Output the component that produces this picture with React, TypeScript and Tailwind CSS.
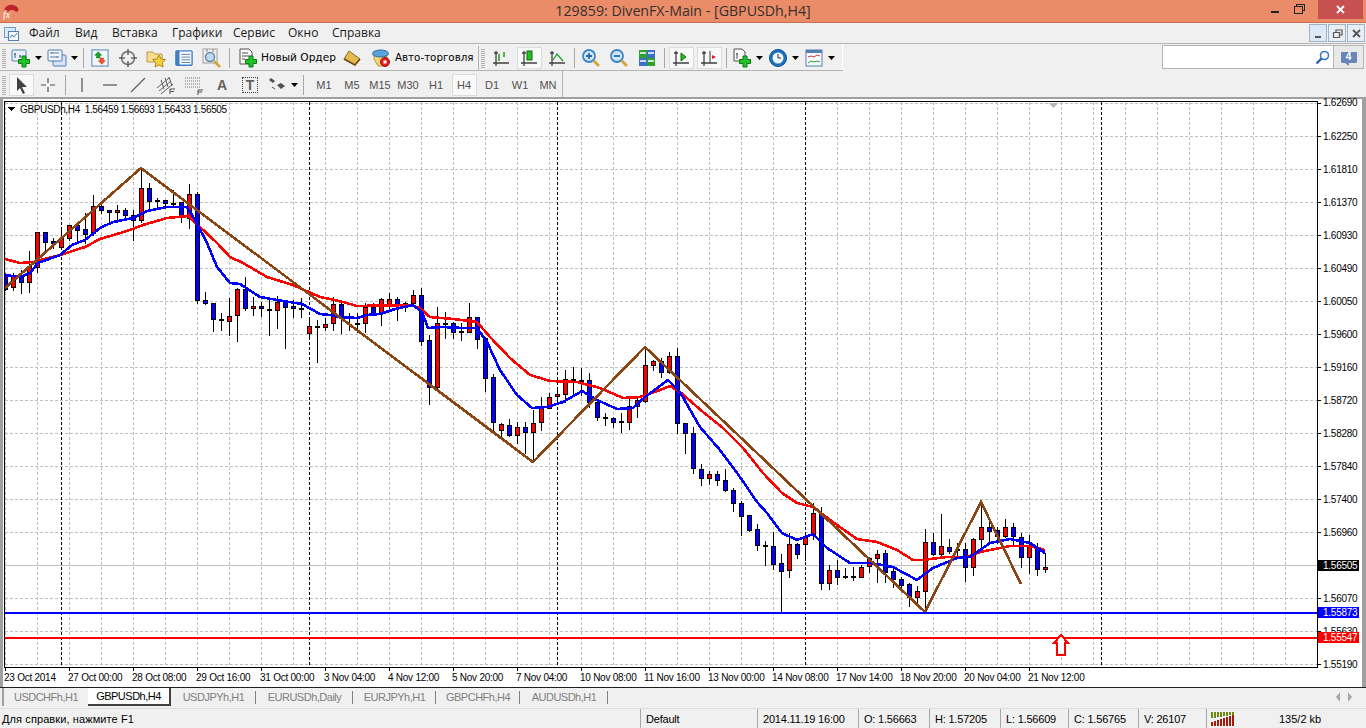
import React from "react";

type Candle = [number, number, number, number, "r" | "b"];

// high, body top, body bottom, low, colour; one every 8px starting at x=5
const candles: Candle[] = [
  [273, 275, 289, 290, "b"], [273, 276, 287, 290, "r"], [270, 277, 282, 293, "b"], [251, 266, 282, 292, "r"],
  [232, 232, 267, 272, "r"], [232, 232, 242, 252, "b"], [238, 241, 243, 248, "b"], [227, 238, 247, 247, "r"],
  [225, 225, 238, 240, "r"], [223, 225, 230, 240, "b"], [213, 229, 234, 243, "b"], [195, 206, 233, 235, "r"],
  [203, 206, 210, 213, "b"], [210, 210, 212, 223, "b"], [205, 210, 212, 222, "r"], [208, 210, 215, 220, "b"],
  [210, 215, 220, 240, "b"], [168, 188, 220, 222, "r"], [183, 188, 201, 210, "b"], [198, 200, 201, 208, "b"],
  [200, 200, 203, 207, "b"], [190, 203, 204, 205, "b"], [202, 202, 217, 222, "b"], [184, 194, 218, 228, "r"],
  [192, 194, 300, 303, "b"], [292, 300, 303, 304, "b"], [303, 303, 319, 331, "b"], [313, 319, 320, 330, "b"],
  [298, 316, 321, 335, "r"], [288, 289, 315, 341, "r"], [277, 289, 308, 310, "b"], [297, 306, 308, 315, "r"],
  [302, 306, 308, 316, "b"], [298, 309, 310, 335, "b"], [296, 302, 310, 328, "r"], [301, 302, 307, 348, "b"],
  [300, 306, 308, 317, "b"], [298, 308, 309, 317, "b"], [317, 326, 333, 338, "r"], [320, 326, 327, 362, "b"],
  [318, 324, 327, 330, "r"], [297, 304, 323, 330, "r"], [303, 304, 317, 333, "b"], [313, 317, 318, 330, "b"],
  [313, 323, 324, 332, "b"], [303, 307, 323, 332, "r"], [303, 307, 314, 315, "b"], [298, 299, 313, 325, "r"],
  [293, 299, 306, 308, "r"], [297, 299, 304, 320, "b"], [302, 303, 304, 311, "b"], [290, 295, 303, 303, "r"],
  [288, 295, 341, 345, "b"], [335, 340, 387, 404, "b"], [307, 323, 387, 388, "r"], [312, 323, 324, 338, "b"],
  [322, 323, 332, 338, "b"], [323, 331, 332, 340, "b"], [303, 317, 332, 332, "r"], [317, 317, 339, 348, "b"],
  [337, 338, 378, 391, "b"], [374, 377, 422, 430, "b"], [423, 424, 430, 437, "r"], [419, 425, 435, 436, "b"],
  [422, 427, 435, 443, "r"], [422, 427, 432, 453, "b"], [410, 423, 432, 462, "r"], [397, 408, 422, 430, "r"],
  [393, 397, 408, 408, "r"], [390, 394, 396, 402, "r"], [370, 379, 394, 402, "r"], [367, 379, 380, 395, "b"],
  [368, 380, 381, 395, "b"], [373, 380, 402, 407, "b"], [400, 402, 417, 420, "b"], [413, 417, 418, 425, "b"],
  [417, 418, 422, 427, "b"], [413, 421, 422, 432, "b"], [397, 406, 422, 429, "r"], [397, 400, 406, 417, "r"],
  [347, 365, 401, 402, "r"], [360, 361, 365, 370, "r"], [358, 361, 372, 377, "b"], [352, 356, 372, 373, "r"],
  [348, 356, 423, 433, "b"], [423, 423, 433, 453, "b"], [427, 433, 468, 473, "b"], [464, 469, 478, 485, "b"],
  [471, 474, 478, 484, "r"], [471, 474, 480, 485, "b"], [469, 480, 490, 491, "b"], [488, 490, 503, 511, "b"],
  [501, 503, 516, 535, "b"], [515, 515, 530, 531, "b"], [524, 529, 545, 550, "b"], [541, 545, 546, 565, "b"],
  [532, 546, 564, 569, "b"], [554, 563, 571, 611, "b"], [533, 544, 570, 577, "r"], [543, 544, 554, 558, "b"],
  [533, 536, 544, 560, "r"], [503, 513, 534, 539, "r"], [507, 514, 583, 589, "b"], [565, 570, 583, 589, "r"],
  [560, 570, 577, 584, "b"], [568, 576, 577, 578, "b"], [567, 576, 577, 580, "b"], [565, 567, 577, 577, "r"],
  [557, 558, 566, 572, "r"], [550, 554, 558, 582, "r"], [550, 553, 572, 582, "b"], [567, 571, 579, 587, "b"],
  [577, 579, 585, 587, "b"], [583, 584, 597, 606, "b"], [586, 591, 597, 604, "r"], [529, 542, 591, 612, "r"],
  [533, 542, 554, 555, "b"], [514, 546, 554, 555, "r"], [539, 547, 551, 553, "b"], [543, 549, 550, 557, "b"],
  [543, 549, 567, 581, "b"], [538, 539, 567, 575, "r"], [502, 527, 539, 547, "r"], [518, 527, 531, 542, "b"],
  [527, 530, 536, 543, "b"], [519, 527, 536, 537, "r"], [523, 527, 536, 546, "b"], [533, 537, 557, 567, "b"],
  [535, 546, 557, 573, "r"], [543, 547, 569, 575, "b"], [553, 567, 569, 572, "r"],
];

const blueLine =
  "5,275 20,277 30,273 38,263 60,255 72,245 85,240 100,228 113,222 133,218 147,211 167,207 187,207 195,220 207,243 217,267 230,283 240,284 260,297 283,301 302,304 320,314 330,315 340,317 357,318 367,315 380,314 395,309 413,305 422,312 428,328 443,327 463,328 477,328 487,342 500,370 517,395 532,408 547,407 563,402 582,391 597,400 617,409 633,408 645,397 668,380 680,392 700,427 720,450 740,477 757,502 767,513 782,533 797,540 813,534 827,548 850,563 870,563 893,567 917,580 933,568 957,558 970,557 990,543 1010,539 1030,543 1045,553";
const redLine =
  "5,259 20,263 33,262 60,255 85,247 100,239 127,231 143,225 167,218 188,216 200,227 217,243 230,257 243,263 267,277 293,285 320,297 330,299 343,302 357,306 410,305 420,308 430,317 453,319 477,322 490,337 510,358 530,375 550,381 577,382 600,388 623,398 640,397 660,390 670,386 680,392 703,412 723,428 743,448 763,473 782,493 797,503 813,507 830,520 857,539 877,542 897,550 913,560 923,560 947,557 967,557 980,552 1010,546 1030,546 1045,550";
const zigzag = "5,288 141,168 533,462 645,347 925,612 981,502 1021,584";

const prices: [string, number][] = [
  ["1.62690", 103], ["1.62250", 136], ["1.61810", 169], ["1.61370", 202], ["1.60930", 235], ["1.60490", 268],
  ["1.60050", 301], ["1.59600", 334], ["1.59160", 367], ["1.58720", 400], ["1.58280", 433], ["1.57840", 466],
  ["1.57400", 499], ["1.56960", 532], ["1.56070", 598], ["1.55630", 631], ["1.55190", 664],
];

const times = [
  "23 Oct 2014", "27 Oct 00:00", "28 Oct 08:00", "29 Oct 16:00", "31 Oct 00:00", "3 Nov 04:00", "4 Nov 12:00",
  "5 Nov 20:00", "7 Nov 04:00", "10 Nov 08:00", "11 Nov 16:00", "13 Nov 00:00", "14 Nov 08:00", "17 Nov 14:00",
  "18 Nov 20:00", "20 Nov 04:00", "21 Nov 12:00",
];

const separators = [61, 309, 557, 805, 1101];
const gridX = Array.from({ length: 41 }, (_, i) => 5 + 32 * i);
const gridY = Array.from({ length: 18 }, (_, i) => 103 + 33 * i);

const tabs = [
  { label: "USDCHFh,H1", width: "w-[86px]" },
  { label: "GBPUSDh,H4", width: "w-[83px]", active: true },
  { label: "USDJPYh,H1", width: "w-[85px]" },
  { label: "EURUSDh,Daily", width: "w-[97px]" },
  { label: "EURJPYh,H1", width: "w-[83px]" },
  { label: "GBPCHFh,H4", width: "w-[84px]" },
  { label: "AUDUSDh,H1", width: "w-[88px]" },
];

const statusCells = [
  { text: "Default", width: "w-[117px]" },
  { text: "2014.11.19 16:00", width: "w-[101px]" },
  { text: "O: 1.56663", width: "w-[71px]" },
  { text: "H: 1.57205", width: "w-[71px]" },
  { text: "L: 1.56609", width: "w-[68px]" },
  { text: "C: 1.56765", width: "w-[70px]" },
  { text: "V: 26107", width: "w-[68px]" },
];

function Chart() {
  return (
    <svg width={1359} height={588} viewBox="3 99 1359 588" shapeRendering="crispEdges" className="block flex-none overflow-visible bg-white">
      <defs>
        <clipPath id="plot">
          <rect x={5} y={102} width={1312} height={565} />
        </clipPath>
      </defs>
      {gridY.map((y) => (
        <line key={y} x1={5} x2={1317} y1={y + 0.5} y2={y + 0.5} stroke="#c0c0c0" strokeDasharray="3 2" />
      ))}
      {gridX.map((x) => (
        <line key={x} x1={x + 0.5} x2={x + 0.5} y1={102} y2={667} stroke="#c0c0c0" strokeDasharray="3 2" />
      ))}
      <rect x={5} y={565} width={1312} height={1} fill="#c0c0c0" />
      {separators.map((x) => (
        <line key={x} x1={x + 0.5} x2={x + 0.5} y1={102} y2={667} stroke="#000" strokeDasharray="3 2" />
      ))}
      <polygon points="1049,103 1058,103 1053.5,108" fill="#b8b8b8" />

      <g clipPath="url(#plot)">
        {candles.map(([high, top, bottom, low, colour], i) => {
          const x = 5 + 8 * i;
          return (
            <g key={x}>
              <rect x={x} y={high} width={1} height={low - high + 1} fill="#000" />
              <rect x={x - 2} y={top} width={5} height={bottom - top + 1} fill="#000" />
              {bottom - top > 1 && (
                <rect x={x - 1} y={top + 1} width={3} height={bottom - top - 1} fill={colour === "r" ? "#ff0000" : "#0000ff"} />
              )}
            </g>
          );
        })}
        <polyline points={redLine} fill="none" stroke="#ff0000" strokeWidth={2.6} />
        <polyline points={blueLine} fill="none" stroke="#0000ff" strokeWidth={2.6} />
        <polyline points={zigzag} fill="none" stroke="#8b4513" strokeWidth={2.6} />
        <rect x={5} y={612} width={1312} height={2} fill="#0000ff" />
        <rect x={5} y={637} width={1312} height={2} fill="#ff0000" />
        <polygon points="1061,635 1068,643 1065,643 1065,655 1057,655 1057,643 1054,643" fill="#fff" stroke="#ff0000" strokeWidth={2} />
      </g>

      <rect x={4.5} y={101.5} width={1313} height={566} fill="none" stroke="#000" />

      {prices.map(([label, y]) => (
        <g key={label}>
          <rect x={1318} y={y} width={3} height={1} fill="#000" />
          <text x={1323} y={y === 103 ? 106 : y + 4} fontSize={10} letterSpacing={-0.25} fill="#000">
            {label}
          </text>
        </g>
      ))}
      <rect x={1318} y={560} width={41} height={11} fill="#000" />
      <text x={1323} y={569} fontSize={10} letterSpacing={-0.25} fill="#fff">1.56505</text>
      <rect x={1318} y={607} width={41} height={11} fill="#0000ff" />
      <text x={1323} y={616} fontSize={10} letterSpacing={-0.25} fill="#fff">1.55873</text>
      <rect x={1318} y={632} width={41} height={11} fill="#ff0000" />
      <text x={1323} y={641} fontSize={10} letterSpacing={-0.25} fill="#fff">1.55547</text>

      {times.map((label, i) => (
        <g key={label}>
          <rect x={5 + 64 * i} y={668} width={1} height={3} fill="#000" />
          <text x={4 + 64 * i} y={681} fontSize={10} letterSpacing={-0.25} fill="#000">
            {label}
          </text>
        </g>
      ))}
      <text x={20} y={113} fontSize={10} letterSpacing={-0.35} fill="#000" xmlSpace="preserve">
        GBPUSDh,H4  1.56459 1.56693 1.56433 1.56505
      </text>
      <polygon points="8,107 15,107 11.5,111" fill="#000" />
    </svg>
  );
}

function Caret() {
  return (
    <svg width={7} height={4} viewBox="0 0 7 4" className="flex-none">
      <path d="M0 0h7L3.5 4z" fill="#000" />
    </svg>
  );
}

function Grip() {
  return (
    <div className="flex h-full w-[8px] flex-none flex-col justify-center pl-[2px]">
      <div className="h-[20px] w-[4px] bg-[repeating-linear-gradient(0deg,#b0b0b0_0px,#b0b0b0_1px,transparent_1px,transparent_2px)]" />
    </div>
  );
}

function Sep() {
  return (
    <div className="flex h-full w-[6px] flex-none items-center justify-center">
      <div className="h-[20px] w-px bg-[#a8a8a8]" />
    </div>
  );
}

function Btn({ children, caret, width = "w-[28px]", active }: { children: React.ReactNode; caret?: boolean; width?: string; active?: boolean }) {
  return (
    <div className={`flex h-full flex-none items-center justify-center gap-[4px] ${width}`}>
      <div className={active ? "flex h-[22px] w-[25px] items-center justify-center border border-[#dcdcdc] bg-[#f9f9f9]" : "flex items-center justify-center"}>
        {children}
      </div>
      {caret && <Caret />}
    </div>
  );
}

function Ico({ children, size = 20 }: { children: React.ReactNode; size?: number }) {
  return (
    <svg width={size} height={size} viewBox="0 0 20 20" className="block">
      {children}
    </svg>
  );
}

const plus = (
  <path d="M11 8h4v3.500h3.500v4H15V19h-4v-3.500H7.500v-4H11z" fill="#22c32a" stroke="#0b7a12" strokeWidth={1} />
);

function NewChartIcon() {
  return (
    <Ico>
      <rect x={1} y={2} width={14} height={11} rx={1} fill="#e8f1fb" stroke="#5580b0" />
      <path d="M4 5v5M3 6h2M9 7v3M8 8h2" stroke="#405a78" fill="none" />
      {plus}
    </Ico>
  );
}

function ProfilesIcon() {
  return (
    <Ico>
      <rect x={6} y={7} width={13} height={11} rx={1} fill="#d5e5f7" stroke="#4f7fb3" />
      <rect x={1} y={2} width={14} height={11} rx={1} fill="#eef5fc" stroke="#4f7fb3" />
      <path d="M3 5h9M3 9h9" stroke="#5e7ea0" fill="none" />
      <path d="M5 4v2M10 8v2" stroke="#5e7ea0" fill="none" />
    </Ico>
  );
}

function MarketWatchIcon() {
  return (
    <Ico size={18}>
      <rect x={1} y={1} width={18} height={18} fill="#f4f8fd" stroke="#7ba2cc" strokeWidth={1.5} />
      <path d="M8 3l4 4H10v3H6V7H4z" fill="#19a524" stroke="#0c7014" strokeWidth={0.5} />
      <path d="M12 17l-4-4h2v-3h4v3h2z" fill="#f0552b" stroke="#b8300c" strokeWidth={0.5} />
    </Ico>
  );
}

function CrosshairTarget() {
  return (
    <Ico>
      <circle cx={10} cy={10} r={6.500} fill="none" stroke="#707070" strokeWidth={1.500} />
      <path d="M10 1v6M10 13v6M1 10h6M13 10h6" stroke="#606060" strokeWidth={1.500} fill="none" />
    </Ico>
  );
}

function FolderStar() {
  return (
    <Ico>
      <path d="M1 4h6l2 2h7v8H1z" fill="#f9dc8c" stroke="#b89a50" />
      <path d="M13 7l2 4 4.500.6-3.200 3.100.8 4.300-4.100-2.100-4 2.100.8-4.300L6.600 11.600 11 11z" fill="#f6d23a" stroke="#a88a20" />
    </Ico>
  );
}

function NavigatorIcon() {
  return (
    <Ico size={18}>
      <rect x={1} y={2} width={18} height={16} rx={1} fill="#f7fbff" stroke="#3f7ec4" strokeWidth={1.500} />
      <rect x={1} y={2} width={4} height={16} fill="#3f7ec4" />
      <path d="M7 6h10M7 9h10M7 12h10M7 15h10" stroke="#5a7a9f" fill="none" />
    </Ico>
  );
}

function TesterIcon() {
  return (
    <Ico>
      <rect x={1} y={1} width={14} height={14} fill="#f0f0f0" stroke="#a0a0a0" />
      <path d="M5 1v3M11 1v3" stroke="#808080" />
      <circle cx={8} cy={9} r={4.500} fill="#bcdcf5" stroke="#6c8aa8" strokeWidth={1.500} />
      <path d="M12 13l6 6" stroke="#d6a53a" strokeWidth={2.500} />
    </Ico>
  );
}

function NewOrderIcon() {
  return (
    <Ico>
      <path d="M2 1h9l3 3v12H2z" fill="#fafafa" stroke="#505050" />
      <path d="M4 5h6M4 8h7M4 11h3" stroke="#505050" fill="none" />
      {plus}
    </Ico>
  );
}

function BookIcon() {
  return (
    <Ico>
      <path d="M7 3l11 8-5 6L2 11z" fill="#e4b94e" stroke="#8a6420" />
      <path d="M2 11l11 6 5-6" fill="none" stroke="#6b4a16" strokeWidth={1.500} />
    </Ico>
  );
}

function AutoTradeIcon() {
  return (
    <Ico>
      <path d="M3 6c2-4 11-4 13 0v5l-4 7H7L3 11z" fill="#efd873" stroke="#b09a40" />
      <ellipse cx={9.500} cy={5.500} rx={8} ry={3.500} fill="#5aa3dc" stroke="#2e6ca8" />
      <circle cx={14} cy={14} r={4.500} fill="#e02020" stroke="#a01010" />
      <rect x={12.500} y={12.500} width={3} height={3} fill="#fff" />
    </Ico>
  );
}

function Axes({ children }: { children?: React.ReactNode }) {
  return (
    <Ico>
      {children}
      <path d="M5 3v15M2 15h16M3 5h4" stroke="#404040" strokeWidth={1.300} fill="none" />
    </Ico>
  );
}

function ZoomIcon({ minus }: { minus?: boolean }) {
  return (
    <Ico>
      <circle cx={8} cy={8} r={6} fill="#cfe6f8" stroke="#3a86c8" strokeWidth={1.800} />
      <path d={minus ? "M5 8h6" : "M5 8h6M8 5v6"} stroke="#2a6aa8" strokeWidth={1.800} fill="none" />
      <path d="M12.500 12.500l5.500 5.500" stroke="#d6a53a" strokeWidth={2.800} />
    </Ico>
  );
}

function TileIcon() {
  return (
    <Ico>
      <rect x={2} y={2} width={8} height={8} fill="#2fa12f" />
      <rect x={10} y={2} width={8} height={8} fill="#3d6fc8" />
      <rect x={2} y={10} width={8} height={8} fill="#3d6fc8" />
      <rect x={10} y={10} width={8} height={8} fill="#2fa12f" />
      <path d="M3 5h6M11 5h6M3 13h6M11 13h6" stroke="#fff" strokeWidth={1.500} />
    </Ico>
  );
}

function IndicatorsIcon() {
  return (
    <Ico>
      <path d="M2 1h8l3 3v9H2z" fill="#fafafa" stroke="#505050" />
      <path d="M5 5v6M4 6h2" stroke="#505050" fill="none" />
      {plus}
    </Ico>
  );
}

function ClockIcon() {
  return (
    <Ico>
      <circle cx={10} cy={10} r={8.500} fill="#1a6fc0" stroke="#0d4f90" />
      <circle cx={10} cy={10} r={5.500} fill="#eef5fc" />
      <path d="M10 6v4h3" stroke="#303030" fill="none" />
    </Ico>
  );
}

function TemplatesIcon() {
  return (
    <Ico>
      <rect x={2} y={2} width={16} height={16} fill="#f7fbff" stroke="#4f7fb3" />
      <rect x={2} y={2} width={16} height={3} fill="#4f7fb3" />
      <path d="M4 9l3-1 3 1 3-2 3 1" stroke="#c04040" fill="none" />
      <path d="M4 15l3-2 3 1 3-1 3 1" stroke="#30a040" fill="none" />
    </Ico>
  );
}

function Toolbars() {
  return (
    <div className="relative flex-none bg-[#f0f0f0]">
      <div className="flex h-[26px] w-[843px] items-center border-r border-white pt-[2px]">
        <Grip />
        <Btn width="w-[36px]" caret><NewChartIcon /></Btn>
        <Btn width="w-[36px]" caret><ProfilesIcon /></Btn>
        <Sep />
        <Btn><MarketWatchIcon /></Btn>
        <Btn><CrosshairTarget /></Btn>
        <Btn><FolderStar /></Btn>
        <Btn><NavigatorIcon /></Btn>
        <Btn><TesterIcon /></Btn>
        <Sep />
        <div className="flex w-[106px] flex-none items-center gap-[3px] pl-[6px]">
          <NewOrderIcon />
          <span className="whitespace-nowrap font-['DejaVu_Sans'] text-[10.6px] text-black">Новый Ордер</span>
        </div>
        <Btn><BookIcon /></Btn>
        <div className="flex w-[112px] flex-none items-center gap-[4px] pl-[5px]">
          <AutoTradeIcon />
          <span className="whitespace-nowrap font-['DejaVu_Sans'] text-[10.3px] text-black">Авто-торговля</span>
        </div>
        <div className="h-full w-px flex-none bg-[#b4b4b4]" />
        <Grip />
        <Btn><Axes><path d="M8 6v7M13 4v5" stroke="#1c9a1c" strokeWidth={1.500} fill="none" /></Axes></Btn>
        <Btn active><Axes><rect x={8} y={3} width={5} height={9} fill="#1fc21f" stroke="#0c6c0c" /></Axes></Btn>
        <Btn><Axes><path d="M6 12l4-6 6 7" stroke="#1c9a1c" strokeWidth={1.200} fill="none" /></Axes></Btn>
        <Sep />
        <Btn><ZoomIcon /></Btn>
        <Btn><ZoomIcon minus /></Btn>
        <Btn><TileIcon /></Btn>
        <Sep />
        <Btn active><Axes><path d="M10 5l5 4-5 4z" fill="#1fc21f" stroke="#0c6c0c" /></Axes></Btn>
        <Btn active><Axes><path d="M11 3v12" stroke="#303030" /><path d="M17 9l-4-2v4z" fill="#e02020" /></Axes></Btn>
        <Sep />
        <Btn width="w-[36px]" caret><IndicatorsIcon /></Btn>
        <Btn width="w-[36px]" caret><ClockIcon /></Btn>
        <Btn width="w-[36px]" caret><TemplatesIcon /></Btn>
      </div>
      <div className="h-px w-[843px] bg-[#b4b4b4]" />
      <div className="flex h-[26px] w-[563px] items-center border-r border-[#b4b4b4] pt-[2px]">
        <Grip />
        <Btn active width="w-[26px]">
          <Ico><path d="M6 2l10 10h-5l3 6-2 1-3-6-3 3z" fill="#404040" /></Ico>
        </Btn>
        <Btn><Ico><path d="M10 3v5M10 12v5M3 10h5M12 10h5" stroke="#505050" strokeWidth={1.200} /></Ico></Btn>
        <Sep />
        <Btn><Ico><path d="M10 3v14" stroke="#505050" strokeWidth={1.200} /></Ico></Btn>
        <Btn><Ico><path d="M3 10h14" stroke="#505050" strokeWidth={1.200} /></Ico></Btn>
        <Btn><Ico><path d="M3 17L17 3" stroke="#606060" strokeWidth={1.200} /></Ico></Btn>
        <Btn><Ico><path d="M1 13l12-10M3 16l12-10M5 19L17 9M5 5l3 9M9 3l3 9M13 2l3 9" stroke="#606060" fill="none" /><path d="M14 14h5M14 14v5M14 16.500h4" stroke="#505050" fill="none" strokeWidth={1} /></Ico></Btn>
        <Btn><Ico><path d="M1 3h15M1 6h15M1 9h15M1 12h15" stroke="#707070" strokeDasharray="1 1" fill="none" /><path d="M14 15h5M14 15v5M14 17h4" stroke="#505050" fill="none" /></Ico></Btn>
        <Btn><span className="font-['Liberation_Sans'] text-[14px] font-bold leading-none text-[#606060]">A</span></Btn>
        <Btn>
          <div className="flex h-[16px] w-[16px] items-center justify-center border border-dotted border-[#404040] font-['Liberation_Sans'] text-[14px] font-bold leading-none text-[#606060]">T</div>
        </Btn>
        <Btn width="w-[36px]" caret><Ico><path d="M4 3l4 3-2 2-4-3zM10 10l4-2 4 3-4 3z" fill="#505050" /><path d="M5 12l3 2" stroke="#505050" /></Ico></Btn>
        <Sep />
        <div className="w-[4px] flex-none" />
        {["M1", "M5", "M15", "M30", "H1", "H4", "D1", "W1", "MN"].map((tf) => (
          <Btn key={tf} active={tf === "H4"}>
            <span className="font-['Liberation_Sans'] text-[11px] leading-none text-[#505050]">{tf}</span>
          </Btn>
        ))}
      </div>
    </div>
  );
}

export default function App() {
  return (
    <div className="flex h-[728px] w-[1366px] flex-col overflow-hidden bg-[#f0f0f0] font-['Liberation_Sans',sans-serif]">
      <div className="grid h-[23px] flex-none grid-cols-[1fr_auto_1fr] border-b border-[#c9714f] bg-[#ea8c68]">
        <div className="flex items-center pl-[2px]">
          <svg width={18} height={18} viewBox="0 0 18 18">
            <path d="M2 8c2-6 10-7 14-2 1 2 0 4-2 4-3-3-7-2-8 0z" fill="#c0242a" />
            <text x={1} y={16} fontSize={10} fontStyle="italic" fontFamily="Liberation Serif" fill="#fff">fx</text>
          </svg>
        </div>
        <div className="font-['Open_Sans'] text-[14.2px] leading-[22px] text-[#35302c]">129859: DivenFX-Main - [GBPUSDh,H4]</div>
        <div className="flex justify-end pr-[3px]">
          <div className="flex w-[25px] items-start justify-center pt-[11px]"><div className="h-[2px] w-[8px] bg-[#222]" /></div>
          <div className="flex w-[25px] justify-center pt-[4px]">
            <svg width={11} height={10} viewBox="0 0 11 10"><path d="M2.500 2.500V.5h8v6h-2M.5 2.500h8v7h-8z" fill="none" stroke="#222" shapeRendering="crispEdges" /></svg>
          </div>
          <div className="ml-[6px] flex h-[19px] w-[45px] items-center justify-center bg-[#c75050]">
            <svg width={9} height={9} viewBox="0 0 9 9"><path d="M1 1l7 7M8 1L1 8" stroke="#fff" strokeWidth={1.800} /></svg>
          </div>
        </div>
      </div>

      <div className="flex h-[21px] flex-none items-center border-b border-[#b4b4b4] bg-[#f0f0f0] pl-[4px]">
        <svg width={15} height={15} viewBox="0 0 15 15" className="flex-none">
          <rect x={0.500} y={1.500} width={11} height={10} fill="#dbe9f8" stroke="#6f9ccb" />
          <rect x={4.500} y={5.500} width={10} height={9} fill="#f7fbff" stroke="#4f7fb3" />
          <path d="M6 12l2-3 2 2 3-4" stroke="#4f7fb3" fill="none" />
        </svg>
        <div className="ml-[10px] flex font-['Open_Sans'] text-[12px] leading-none text-[#1a1a1a]">
          <span className="w-[46px]">Файл</span>
          <span className="w-[37px]">Вид</span>
          <span className="w-[60px]">Вставка</span>
          <span className="w-[61px]">Графики</span>
          <span className="w-[55px]">Сервис</span>
          <span className="w-[44px]">Окно</span>
          <span>Справка</span>
        </div>
        <div className="ml-auto flex gap-px pr-[1px]">
          {[
            <path key="m" d="M4 11h6" stroke="#555" strokeWidth={2} />,
            <path key="r" d="M6 6V4h6v5h-2M3.500 6.500h6v5h-6z" stroke="#555" fill="none" strokeWidth={1.200} />,
            <path key="c" d="M4 4l7 7M11 4l-7 7" stroke="#555" strokeWidth={1.800} />,
          ].map((glyph, i) => (
            <div key={i} className={`flex h-[18px] w-[18px] items-center justify-center border border-[#9fb3c8] ${i === 0 ? "bg-[#dce9f7]" : "bg-[#e9eef4]"}`}>
              <svg width={15} height={15} viewBox="0 0 15 15">{glyph}</svg>
            </div>
          ))}
        </div>
      </div>

      <div className="relative flex-none">
        <Toolbars />
        <div className="absolute right-[2px] top-[1px] flex h-[24px] w-[202px] border border-[#b4b4b4]">
          <div className="flex flex-1 items-center justify-end bg-white pr-[3px]">
            <svg width={15} height={15} viewBox="0 0 15 15">
              <circle cx={9.500} cy={5.500} r={4} fill="#fff" stroke="#3a78c8" strokeWidth={1.600} />
              <path d="M6.500 8.500L1.500 13.500" stroke="#2a5fb0" strokeWidth={2.400} />
            </svg>
          </div>
          <div className="flex w-[30px] items-center justify-center border-l border-[#b4b4b4] bg-[#e9e9e9]">
            <div className="relative flex h-[11px] w-[16px] items-center justify-center rounded-[1px] bg-[#6a86b8] text-[10px] font-bold leading-none text-white">
              4
              <div className="absolute -bottom-[3px] left-[4px] h-0 w-0 border-l-[4px] border-t-[3px] border-l-transparent border-t-[#6a86b8]" />
            </div>
          </div>
        </div>
      </div>

      <div className="flex h-[590px] flex-none flex-col">
        <div className="h-[2px] flex-none bg-[#a0a0a0]" />
        <div className="flex h-[588px] flex-none">
          <div className="w-[3px] flex-none bg-[#a0a0a0]" />
          <Chart />
          <div className="w-[4px] flex-none bg-[#a0a0a0]" />
        </div>
      </div>

      <div className="flex h-[21px] flex-none border-t border-[#202020] pb-[2px] pl-[2px] font-['Liberation_Sans'] text-[11px] tracking-[-0.5px]">
        {tabs.map((tab) => (
          <div
            key={tab.label}
            className={
              tab.active
                ? `flex flex-none items-center justify-center border-b-2 border-r-2 border-[#404040] bg-white text-black ${tab.width}`
                : `flex flex-none items-center justify-center text-[#808080] ${tab.width} ${tab.label === "USDCHFh,H1" ? "border-l-2 border-[#a0a0a0]" : "relative after:absolute after:right-0 after:top-[3px] after:h-[13px] after:w-px after:bg-[#808080]"}`
            }
          >
            {tab.label}
          </div>
        ))}
        <div className="ml-auto flex items-center gap-[8px] pr-[14px]">
          <div className="h-0 w-0 border-y-[5px] border-r-[4px] border-y-transparent border-r-[#a8a8a8]" />
          <div className="h-0 w-0 border-y-[5px] border-l-[4px] border-y-transparent border-l-[#a8a8a8]" />
        </div>
      </div>

      <div className="flex h-[20px] flex-none items-center border-t border-[#dcdcdc] font-['Liberation_Sans'] text-[11px] text-black">
        <div className="w-[640px] flex-none whitespace-nowrap pl-[2px] pt-[1px] tracking-[0.1px]">Для справки, нажмите F1</div>
        {statusCells.map((cell) => (
          <div key={cell.text} className={`flex h-full flex-none items-center whitespace-nowrap border-l border-[#a8a8a8] pl-[5px] pt-[1px] tracking-[-0.2px] ${cell.width}`}>
            {cell.text}
          </div>
        ))}
        <div className="flex h-full flex-1 items-center border-l border-[#a8a8a8] pl-[4px]">
          <svg width={24} height={14} viewBox="0 0 24 14" shapeRendering="crispEdges">
            {[0, 3, 6, 9, 12, 15, 18, 21].map((x, i) => (
              <g key={x}>
                <rect x={x} y={0} width={2} height={6 - i * 0.5} fill="#6d8a10" />
                <rect x={x} y={10 - i} width={2} height={4 + i} fill="#a01c08" />
              </g>
            ))}
          </svg>
          <span className="ml-[44px] pt-[1px]">135/2 kb</span>
        </div>
      </div>
    </div>
  );
}
